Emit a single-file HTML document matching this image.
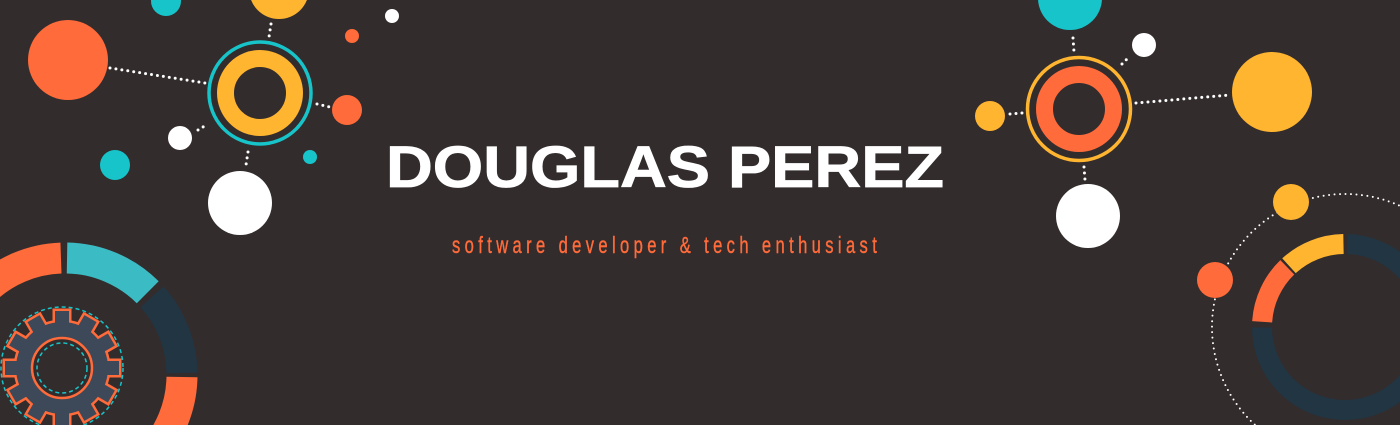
<!DOCTYPE html>
<html><head><meta charset="utf-8"><style>
html,body{margin:0;padding:0;background:#332c2d;width:1400px;height:425px;overflow:hidden;}
svg{display:block}
</style></head><body>
<svg width="1400" height="425" viewBox="0 0 1400 425" xmlns="http://www.w3.org/2000/svg" style="overflow:hidden">
<rect width="1400" height="425" fill="#332c2d"/>
<g fill="none" stroke="#fff" stroke-width="3" stroke-linecap="round" stroke-dasharray="0 6">
<line x1="110" y1="68" x2="205" y2="83"/>
<line x1="271" y1="24" x2="269" y2="37"/>
<line x1="317" y1="104" x2="330" y2="107"/>
<line x1="198" y1="130" x2="208" y2="124"/>
<line x1="248" y1="152" x2="246" y2="165"/>
<line x1="1073" y1="38" x2="1074" y2="52"/>
<line x1="1122" y1="64" x2="1130" y2="56"/>
<line x1="1010" y1="114" x2="1022" y2="113"/>
<line x1="1136" y1="103" x2="1230" y2="95"/>
<line x1="1084" y1="167" x2="1085" y2="180"/>
</g>
<circle cx="1345" cy="327" r="133" fill="none" stroke="#fff" stroke-width="2" stroke-linecap="round" stroke-dasharray="0 5.5"/>
<circle cx="68" cy="60" r="40" fill="#ff6b3a"/>
<circle cx="166" cy="1" r="15" fill="#17c4c9"/>
<circle cx="279" cy="-11" r="30" fill="#ffb530"/>
<circle cx="347" cy="110" r="15" fill="#ff6b3a"/>
<circle cx="180" cy="138" r="12" fill="#fff"/>
<circle cx="115" cy="165" r="15" fill="#17c4c9"/>
<circle cx="310" cy="157" r="7" fill="#17c4c9"/>
<circle cx="240" cy="203" r="32" fill="#fff"/>
<circle cx="352" cy="36" r="7" fill="#ff6b3a"/>
<circle cx="392" cy="16" r="7" fill="#fff"/>
<circle cx="260" cy="93" r="51" fill="none" stroke="#17c4c9" stroke-width="3.5"/>
<circle cx="260" cy="93" r="34.5" fill="none" stroke="#ffb530" stroke-width="17"/>
<circle cx="1070" cy="-2" r="32" fill="#17c4c9"/>
<circle cx="1144" cy="45" r="12" fill="#fff"/>
<circle cx="990" cy="116" r="15" fill="#ffb530"/>
<circle cx="1272" cy="92" r="40" fill="#ffb530"/>
<circle cx="1088" cy="216" r="32" fill="#fff"/>
<circle cx="1079" cy="109" r="51.5" fill="none" stroke="#ffb530" stroke-width="3.5"/>
<circle cx="1079" cy="109" r="34.5" fill="none" stroke="#ff6b3a" stroke-width="17"/>
<g fill="none" stroke-width="20">
<circle cx="1345" cy="327" r="83" pathLength="360" stroke="#213543" stroke-dasharray="268 92" transform="rotate(272 1345 327)"/>
<circle cx="1345" cy="327" r="83" pathLength="360" stroke="#ff6b3a" stroke-dasharray="42 318" transform="rotate(184 1345 327)"/>
<circle cx="1345" cy="327" r="83" pathLength="360" stroke="#ffb530" stroke-dasharray="41 319" transform="rotate(228 1345 327)"/>
</g>
<circle cx="1291" cy="202" r="18" fill="#ffb530"/>
<circle cx="1215" cy="280" r="18" fill="#ff6b3a"/>
<g fill="none" stroke-width="31">
<circle cx="65" cy="375" r="117" pathLength="360" stroke="#ff6b3a" stroke-dasharray="88 272" transform="rotate(180 65 375)"/>
<circle cx="65" cy="375" r="117" pathLength="360" stroke="#3bbcc4" stroke-dasharray="44 316" transform="rotate(271 65 375)"/>
<circle cx="65" cy="375" r="117" pathLength="360" stroke="#213543" stroke-dasharray="41 319" transform="rotate(318 65 375)"/>
<circle cx="65" cy="375" r="117" pathLength="360" stroke="#ff6b3a" stroke-dasharray="88 272" transform="rotate(1 65 375)"/>
</g>
<circle cx="62" cy="368" r="61" fill="none" stroke="#17c4c9" stroke-width="1.5" stroke-dasharray="4 3"/>
<g transform="translate(62 368)">
<g stroke="#ff6b3a" stroke-width="5" fill="#ff6b3a">
<circle r="46"/>
<rect x="-7" y="-57" width="14" height="16"/>
<rect x="-7" y="-57" width="14" height="16" transform="rotate(30)"/>
<rect x="-7" y="-57" width="14" height="16" transform="rotate(60)"/>
<rect x="-7" y="-57" width="14" height="16" transform="rotate(90)"/>
<rect x="-7" y="-57" width="14" height="16" transform="rotate(120)"/>
<rect x="-7" y="-57" width="14" height="16" transform="rotate(150)"/>
<rect x="-7" y="-57" width="14" height="16" transform="rotate(180)"/>
<rect x="-7" y="-57" width="14" height="16" transform="rotate(210)"/>
<rect x="-7" y="-57" width="14" height="16" transform="rotate(240)"/>
<rect x="-7" y="-57" width="14" height="16" transform="rotate(270)"/>
<rect x="-7" y="-57" width="14" height="16" transform="rotate(300)"/>
<rect x="-7" y="-57" width="14" height="16" transform="rotate(330)"/>
</g>
<g fill="#3d4858">
<circle r="46"/>
<rect x="-7" y="-57" width="14" height="16"/>
<rect x="-7" y="-57" width="14" height="16" transform="rotate(30)"/>
<rect x="-7" y="-57" width="14" height="16" transform="rotate(60)"/>
<rect x="-7" y="-57" width="14" height="16" transform="rotate(90)"/>
<rect x="-7" y="-57" width="14" height="16" transform="rotate(120)"/>
<rect x="-7" y="-57" width="14" height="16" transform="rotate(150)"/>
<rect x="-7" y="-57" width="14" height="16" transform="rotate(180)"/>
<rect x="-7" y="-57" width="14" height="16" transform="rotate(210)"/>
<rect x="-7" y="-57" width="14" height="16" transform="rotate(240)"/>
<rect x="-7" y="-57" width="14" height="16" transform="rotate(270)"/>
<rect x="-7" y="-57" width="14" height="16" transform="rotate(300)"/>
<rect x="-7" y="-57" width="14" height="16" transform="rotate(330)"/>
</g>
<circle r="30" fill="#332c2d" stroke="#ff6b3a" stroke-width="2.5"/>
<circle r="25" fill="none" stroke="#17c4c9" stroke-width="1.5" stroke-dasharray="4 3"/>
</g>
<text x="386" y="187" textLength="558" lengthAdjust="spacingAndGlyphs" fill="#fff" stroke="#fff" stroke-width="0.8" font-family="Liberation Sans, sans-serif" font-weight="bold" font-size="58">DOUGLAS PEREZ</text>
<g transform="translate(452 253) scale(0.72 1)">
<text x="0" y="0" textLength="590" lengthAdjust="spacing" fill="#ff6b3a" stroke="#ff6b3a" stroke-width="0.4" font-family="Liberation Sans, sans-serif" font-size="23">software developer &amp; tech enthusiast</text>
</g>
</svg>
</body></html>
